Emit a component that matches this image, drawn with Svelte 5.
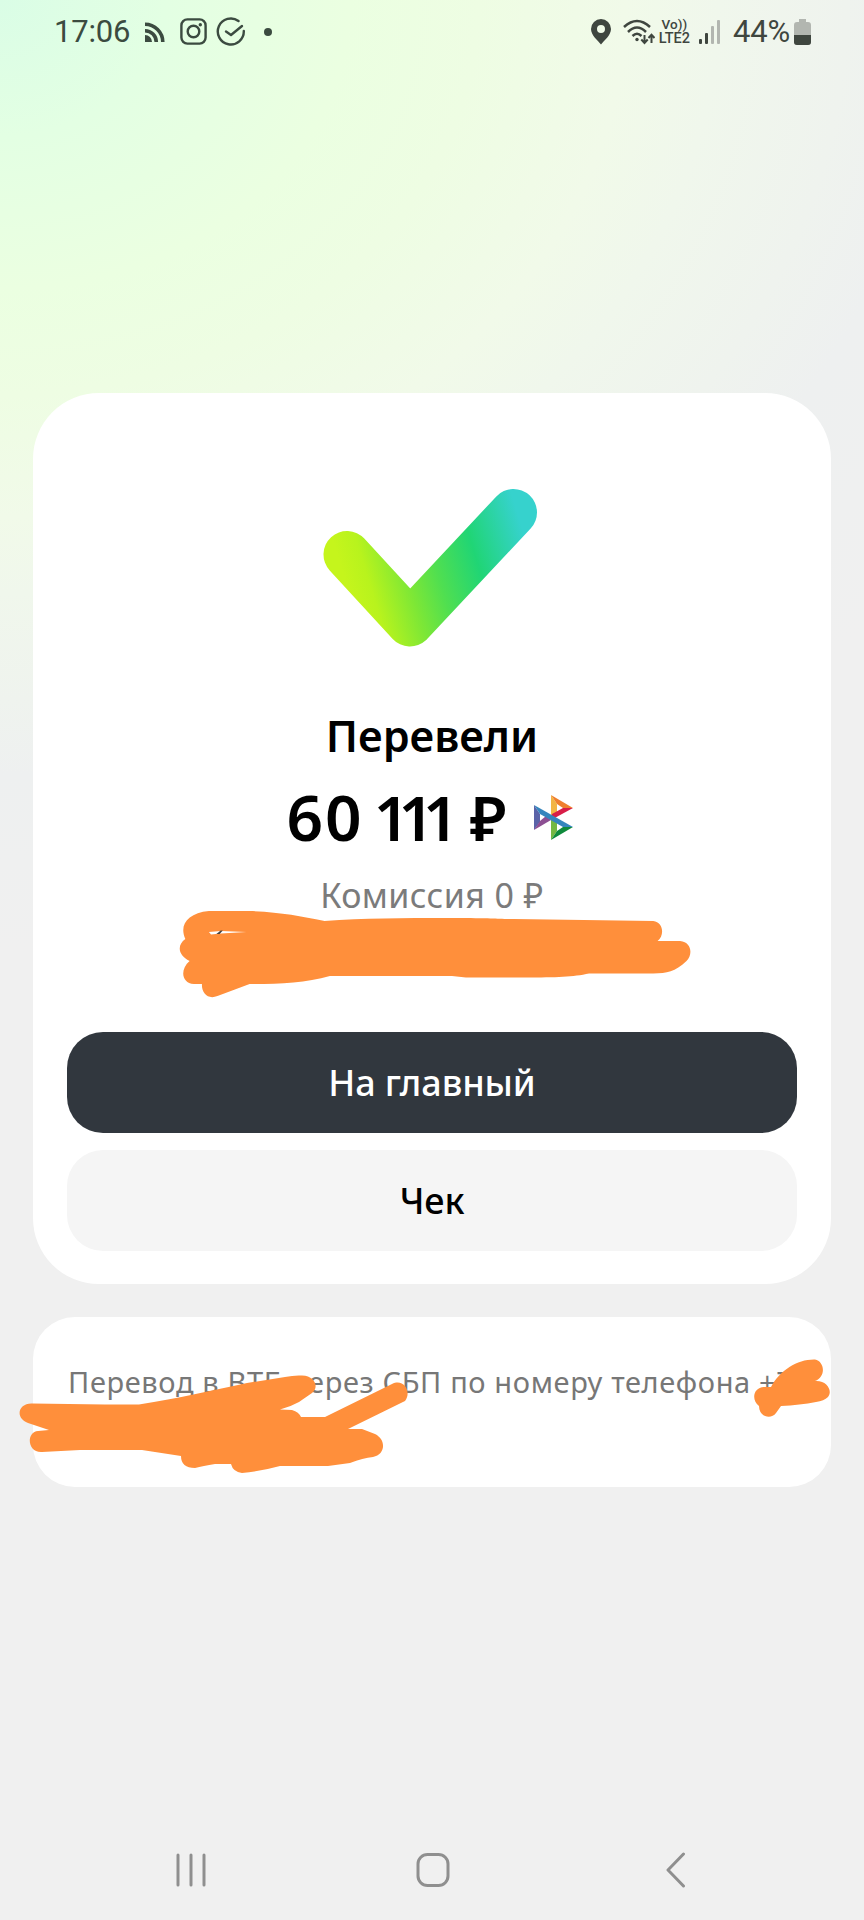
<script>
    const time = "17:06";
    const battery = "44%";
    const bars = [5, 11, 18, 24];
</script>

<div class="screen">
    <header class="status">
        <span class="time">{time}</span>
        <svg class="rss" width="20" height="20" viewBox="0 0 20 20">
            <path d="M0 13a7 7 0 0 1 7 7H0z" fill="#3b4b40" />
            <path d="M0 8.7A11.3 11.3 0 0 1 11.3 20M0 2.2A17.8 17.8 0 0 1 17.8 20" fill="none" stroke="#3b4b40" stroke-width="3.6" />
        </svg>
        <svg class="insta" width="27" height="27" viewBox="0 0 27 27" fill="none" stroke="#3b4b40" stroke-width="2.4">
            <rect x="1.4" y="1.4" width="24.2" height="24.2" rx="6" />
            <circle cx="13.5" cy="13.5" r="5.8" />
            <circle cx="20.3" cy="6.7" r="1.7" fill="#3b4b40" stroke="none" />
        </svg>
        <svg class="done" width="30" height="30" viewBox="0 0 30 30" fill="none" stroke="#3b4b40" stroke-width="2.4" stroke-linecap="round" stroke-linejoin="round">
            <path d="M22.500 4A13 13 0 1 0 27.800 14" />
            <path d="M10 14.500l5 3.500L26 9" />
        </svg>
        <span class="dot"></span>

        <div class="right">
            <svg class="pin" width="20" height="26" viewBox="0 0 20 26">
                <path fill="#3f463f" fill-rule="evenodd" d="M10 0a10 10 0 0 0-10 10c0 6.500 7 11.500 10 15.500C13 21.500 20 16.500 20 10A10 10 0 0 0 10 0zm0 6a4 4 0 1 1 0 8 4 4 0 0 1 0-8z" />
            </svg>
            <svg class="wifi" width="32" height="26" viewBox="0 0 32 26" fill="none" stroke="#3f463f" stroke-width="2.5">
                <path d="M1 8Q14 -4 27 8M5 13Q14 4 23 13M9.500 17Q14 12.500 18.500 17" />
                <circle cx="14" cy="20.500" r="1.700" fill="#3f463f" stroke="none" />
                <path d="M21.500 16v8M18.300 20.500l3.200 3.500 3.200-3.500M28.500 24v-8M25.500 19l3-3.300 3 3.300" stroke-width="2" />
            </svg>
            <div class="lte"><span class="vo">Vo))</span><span>LTE2</span></div>
            <div class="signal">
                {#each bars as height, index}
                    <i class:weak={index > 1} style="height: {height}px"></i>
                {/each}
            </div>
            <span class="percent">{battery}</span>
            <svg class="battery" width="17" height="26" viewBox="0 0 17 26">
                <path d="M5 0h7v3h2a3 3 0 0 1 3 3v17a3 3 0 0 1-3 3H3a3 3 0 0 1-3-3V6a3 3 0 0 1 3-3h2z" fill="#b2b6b0" />
                <path d="M0 16h17v7a3 3 0 0 1-3 3H3a3 3 0 0 1-3-3z" fill="#3f463f" />
            </svg>
        </div>
    </header>

    <main>
        <section class="card result">
            <svg class="check" width="216" height="160" viewBox="322 488 216 160">
                <defs>
                    <linearGradient id="check" gradientUnits="userSpaceOnUse" x1="345" y1="580" x2="525" y2="525">
                        <stop offset="0" stop-color="#c5f51c" />
                        <stop offset="0.12" stop-color="#b8f31d" />
                        <stop offset="0.32" stop-color="#7de736" />
                        <stop offset="0.48" stop-color="#50df50" />
                        <stop offset="0.7" stop-color="#20d575" />
                        <stop offset="0.98" stop-color="#36d2cd" />
                    </linearGradient>
                </defs>
                <path d="M347 554.500L410 623L513.500 512.500" fill="none" stroke="url(#check)" stroke-width="47" stroke-linecap="round" stroke-linejoin="round" />
            </svg>
            <h1>Перевели</h1>
            <div class="amount">
                <div class="sum"><span class="thousands">60</span> <span class="rest">111</span> ₽</div>
                <svg width="40" height="46" viewBox="0 0 40 46">
                    <path fill="#5a63a8" d="M0 10l6 9v8l-6 8z" />
                    <path fill="#8d4f93" d="M0 35l17-10-5-4-6 5z" />
                    <path fill="#f2b544" d="M17 0l6 9v9l-6 7z" />
                    <path fill="#ef7f2e" d="M17 0l22 13H29l-6-4z" />
                    <path fill="#d81e48" d="M39 13L17 25l1-6 11-6z" />
                    <path fill="#74b843" d="M17 22l6 5v9l-6 9z" />
                    <path fill="#0f8a3c" d="M17 45l22-13H29l-6 4z" />
                    <path fill="#3585bd" d="M0 10l39 22H29L6 19z" />
                </svg>
            </div>
            <p class="fee">Комиссия 0 ₽</p>
            <button class="primary">На главный</button>
            <button>Чек</button>
            <svg class="scribble recipient" width="514" height="90" viewBox="178 910 480 90" preserveAspectRatio="none">
                <path d="M183 939C177 925 185 913 205 911H243C272 912 290 916 313 921C350 918 385 918 430 918S470 919 490 919L620 921C629 922 631 935 624 941H645C656 942 657 955 651 961C640 972 633 973 620 973.500H560C545 977 530 977.500 500 977.500H445L432 976H318C295 983 270 984 243 984L213 996C204 1000 198 993 198.500 984H191C179 983 178 969 187 961C176 955 175 945 183 939z" />
                <path class="gap" d="M205 932l11-1 24 1-24 1.500-9 1z" />
                <path class="ink" d="M212 934l4-3.500h2l-3 3.500z" />
            </svg>
        </section>

        <section class="card details">
            <p>Перевод в ВТБ через СБП по номеру телефона +7</p>
            <svg class="scribble account" width="390" height="100" viewBox="19 1374 390 100">
                <path d="M28 1423C14 1417 19 1403 32 1403.500L105 1404.500H139C180 1398 210 1391 247 1383L285 1377Q294 1375 302 1375.500C316 1376 319 1388 312 1393L299 1402Q290 1407 280 1409.500L292 1410Q299 1412 301 1417H325L392 1384C404 1378 412 1392 405 1401L348 1429H362L375 1434C387 1440 385 1455 373 1457Q363 1458 350 1463L328 1466H280Q262 1471 242 1473Q233 1472 231 1464H215Q203 1466 195 1468Q181 1468 181 1456L142 1450H80L42 1452C27 1453 26 1432 38 1431L49 1430z" />
            </svg>
            <svg class="scribble phone" width="78" height="60" viewBox="753 1359 78 60">
                <path d="M759 1406C751 1400 753 1387 765 1387H771C780 1370 798 1359 815 1359.500C824 1361 827 1376 815 1381C827 1380 833 1391 828 1397Q824 1401 816 1402Q800 1405 781 1406L776 1413C771 1420 759 1417 759 1406z" />
            </svg>
        </section>
    </main>

    <nav>
        <svg width="30" height="34" viewBox="0 0 30 34"><path d="M2 2v30M15 2v30M28 2v30" /></svg>
        <svg class="home" width="34" height="34" viewBox="0 0 34 34"><rect x="2" y="1.500" width="30" height="31" rx="9.500" /></svg>
        <svg width="20" height="36" viewBox="0 0 20 36"><path d="M17.500 2L2 18l15.500 16" /></svg>
    </nav>
</div>

<style>
    :global(body) {
        margin: 0;
    }

    .screen {
        display: flex;
        flex-direction: column;
        width: 864px;
        height: 1920px;
        overflow: hidden;
        font-family: "Noto Sans", "Open Sans", sans-serif;
        background: radial-gradient(ellipse 920px 760px at 0 0, #dafde6 0%, #e3ffe3 18%, #ebffe1 38%, #eefde3 52%, #f1fae9 68%, #f0f7ec 78%, #eff3ee 92%, #eef0f0 102%, #f0f0f0 125%);
    }

    .status {
        display: flex;
        align-items: center;
        height: 63px;
        padding: 0 53px 0 54px;
        box-sizing: border-box;
        color: #3b4b40;
        font-family: Roboto, sans-serif;
    }

    .time,
    .percent {
        font-size: 31px;
        line-height: 62px;
        letter-spacing: -0.2px;
    }

    .rss {
        margin-left: 15px;
    }

    .insta {
        margin-left: 15px;
    }

    .done {
        margin-left: 9px;
    }

    .dot {
        width: 8px;
        height: 8px;
        margin-left: 18px;
        border-radius: 50%;
        background: #3b4b40;
    }

    .right {
        display: flex;
        align-items: center;
        margin-left: auto;
        color: #3f463f;
    }

    .wifi {
        margin-left: 12px;
    }

    .lte {
        display: flex;
        flex-direction: column;
        align-items: center;
        margin-left: 4px;
        font-size: 14.5px;
        font-weight: 500;
        line-height: 15px;
    }

    .vo {
        font-size: 13.5px;
        line-height: 14px;
    }

    .signal {
        display: flex;
        align-items: flex-end;
        gap: 3px;
        margin: 0 13px 0 9px;
    }

    .signal i {
        width: 3px;
        border-radius: 1px;
        background: #3f463f;
    }

    .signal .weak {
        background: #b2b6b0;
    }

    .battery {
        margin-left: 4px;
    }

    main {
        display: flex;
        flex-direction: column;
        gap: 33px;
        padding: 330px 33px 0;
    }

    .card {
        position: relative;
        box-sizing: border-box;
        background: #fff;
    }

    .result {
        display: flex;
        flex-direction: column;
        align-items: center;
        height: 891px;
        padding: 95px 34px 0;
        border-radius: 66px;
    }

    .check {
        margin-right: 4px;
    }

    h1 {
        margin: 58px 0 0;
        font-size: 43px;
        font-weight: 600;
        line-height: 60px;
    }

    .amount {
        display: flex;
        align-items: center;
        gap: 27px;
        height: 80px;
        margin-top: 12px;
        padding-right: 4px;
        font-size: 62px;
        font-weight: 600;
    }

    .sum {
        padding-bottom: 2px;
        line-height: 76px;
    }

    .thousands {
        margin-right: -6px;
        font-size: 64px;
        letter-spacing: 2px;
    }

    /* the ones sit tighter than the tabular digits of the font */
    .rest {
        margin-right: 6px;
        letter-spacing: -10.8px;
    }

    .fee {
        margin: 14px 0 0;
        color: #7b7b7b;
        font-size: 34px;
        line-height: 46px;
        letter-spacing: 0.4px;
    }

    button {
        width: 100%;
        height: 101px;
        margin-top: 17px;
        padding: 0;
        border: 0;
        border-radius: 36px;
        background: #f5f5f5;
        color: #000;
        font-family: inherit;
        font-size: 36px;
        font-weight: 500;
        letter-spacing: -0.1px;
    }

    .primary {
        margin-top: 114px;
        background: #31373e;
        color: #fff;
    }

    .details {
        height: 170px;
        padding: 43px 0 0 35px;
        border-radius: 42px;
    }

    .details p {
        margin: 0;
        color: #777;
        font-size: 29px;
        line-height: 44px;
        letter-spacing: 0.63px;
        white-space: nowrap;
    }

    .scribble {
        position: absolute;
        fill: #ff8f3b;
        overflow: visible;
    }

    .gap {
        fill: #fff;
    }

    .ink {
        fill: #444;
    }

    .recipient {
        left: 147px;
        top: 517px;
    }

    .account {
        left: -14px;
        top: 57px;
    }

    .phone {
        left: 720px;
        top: 42px;
    }

    nav {
        display: flex;
        justify-content: space-between;
        align-items: center;
        height: 100px;
        margin-top: auto;
        padding: 0 178px 0 176px;
    }

    nav svg {
        fill: none;
        stroke: #8f8f8f;
        stroke-width: 3;
        stroke-linecap: round;
        stroke-linejoin: round;
    }

    .home {
        margin-right: 6px;
    }
</style>
